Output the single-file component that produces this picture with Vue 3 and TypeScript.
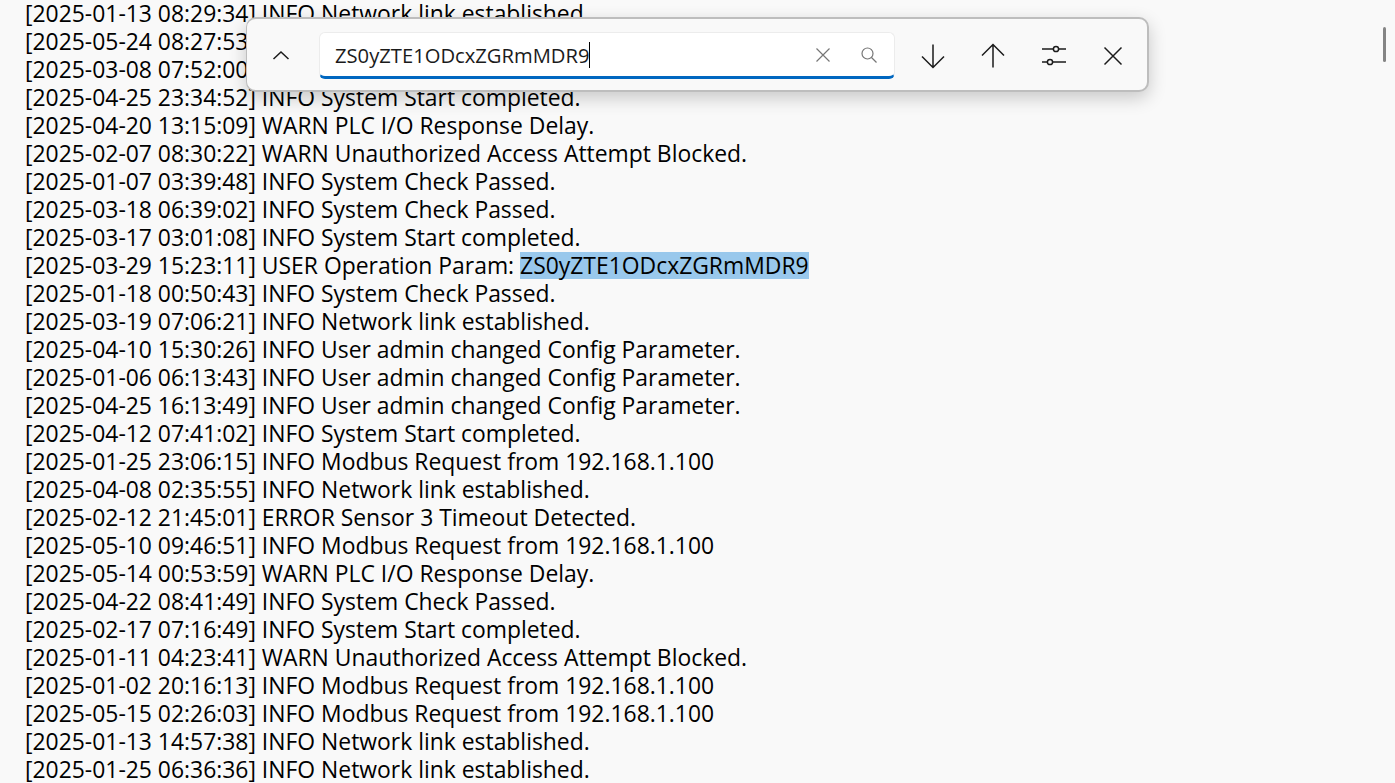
<script setup lang="ts">
const lines: string[] = [
  '[2025-01-13 08:29:34] INFO Network link established.',
  '[2025-05-24 08:27:53]',
  '[2025-03-08 07:52:00]',
  '[2025-04-25 23:34:52] INFO System Start completed.',
  '[2025-04-20 13:15:09] WARN PLC I/O Response Delay.',
  '[2025-02-07 08:30:22] WARN Unauthorized Access Attempt Blocked.',
  '[2025-01-07 03:39:48] INFO System Check Passed.',
  '[2025-03-18 06:39:02] INFO System Check Passed.',
  '[2025-03-17 03:01:08] INFO System Start completed.',
  '[2025-03-29 15:23:11] USER Operation Param: ',
  '[2025-01-18 00:50:43] INFO System Check Passed.',
  '[2025-03-19 07:06:21] INFO Network link established.',
  '[2025-04-10 15:30:26] INFO User admin changed Config Parameter.',
  '[2025-01-06 06:13:43] INFO User admin changed Config Parameter.',
  '[2025-04-25 16:13:49] INFO User admin changed Config Parameter.',
  '[2025-04-12 07:41:02] INFO System Start completed.',
  '[2025-01-25 23:06:15] INFO Modbus Request from 192.168.1.100',
  '[2025-04-08 02:35:55] INFO Network link established.',
  '[2025-02-12 21:45:01] ERROR Sensor 3 Timeout Detected.',
  '[2025-05-10 09:46:51] INFO Modbus Request from 192.168.1.100',
  '[2025-05-14 00:53:59] WARN PLC I/O Response Delay.',
  '[2025-04-22 08:41:49] INFO System Check Passed.',
  '[2025-02-17 07:16:49] INFO System Start completed.',
  '[2025-01-11 04:23:41] WARN Unauthorized Access Attempt Blocked.',
  '[2025-01-02 20:16:13] INFO Modbus Request from 192.168.1.100',
  '[2025-05-15 02:26:03] INFO Modbus Request from 192.168.1.100',
  '[2025-01-13 14:57:38] INFO Network link established.',
  '[2025-01-25 06:36:36] INFO Network link established.',
]
const query = 'ZS0yZTE1ODcxZGRmMDR9'
</script>

<template>
  <div class="page">
    <div class="log">
      <div v-for="(line, i) in lines" :key="i" class="line">{{ line }}<mark v-if="i === 9" class="hit">{{ query }}</mark></div>
    </div>
    <div class="thumb"></div>
    <div class="find">
      <button class="btn chevron" aria-label="Collapse">
        <svg width="18" height="18" viewBox="0 0 18 18"><path d="M1.5 12 9 5l7.5 7" /></svg>
      </button>
      <div class="field">
        <span class="value">{{ query }}</span><span class="caret"></span>
        <span class="spacer"></span>
        <svg class="mini clear" width="16" height="16" viewBox="0 0 16 16"><path d="M1.5 1.5l13 13M14.5 1.5l-13 13" /></svg>
        <svg class="mini search" width="18" height="18" viewBox="0 0 18 18"><circle cx="7.5" cy="7.5" r="5.5" /><path d="M11.5 11.5l5 5" /></svg>
      </div>
      <div class="actions">
        <button class="btn" aria-label="Next">
          <svg width="26" height="26" viewBox="0 0 26 26"><path d="M13 1.5v23M2 13.5l11 11 11-11" /></svg>
        </button>
        <button class="btn" aria-label="Previous">
          <svg width="26" height="26" viewBox="0 0 26 26"><path d="M13 24.5v-23M2 12.5l11-11 11 11" /></svg>
        </button>
        <button class="btn" aria-label="Options">
          <svg width="26" height="26" viewBox="0 0 26 26"><path d="M2 6h11.500M18.500 6H26M2 19h5.500M12.500 19H26" /><circle cx="16" cy="6" r="2.600" /><circle cx="10" cy="19" r="2.600" /></svg>
        </button>
        <button class="btn" aria-label="Close">
          <svg width="26" height="26" viewBox="0 0 26 26"><path d="M4.500 4.500l17 17M21.500 4.500l-17 17" /></svg>
        </button>
      </div>
    </div>
  </div>
</template>

<style scoped>
.page {
  position: relative;
  width: 1395px;
  height: 783px;
  overflow: hidden;
  background: #f9f9f9;
  font-family: "Open Sans", "Noto Sans", sans-serif;
  color: #000;
}
.log {
  padding-left: 25px;
}
.line {
  height: 28px;
  line-height: 28px;
  font-size: 22.900px;
  white-space: pre;
}
.hit {
  display: inline-block;
  height: 27px;
  line-height: 28px;
  background: #99c8ec;
  color: #000;
  vertical-align: top;
}
.thumb {
  position: absolute;
  left: 1383px;
  top: 27px;
  width: 3px;
  height: 35px;
  border-radius: 2px;
  background: #858585;
}
.find {
  position: absolute;
  left: 246px;
  top: 17px;
  box-sizing: border-box;
  width: 903px;
  height: 75px;
  display: flex;
  align-items: center;
  padding: 2px 0 0 14px;
  background: #f9f9f9;
  border: 2px solid #bdbdbd;
  border-left-width: 1px;
  border-radius: 10px;
  box-shadow: 0 6px 18px rgba(0, 0, 0, 0.2);
}
.btn {
  width: 60px;
  height: 44px;
  display: flex;
  align-items: center;
  justify-content: center;
  padding: 0;
  border: 0;
  background: none;
}
.btn svg {
  fill: none;
  stroke: #1b1b1b;
  stroke-width: 1.500;
}
.chevron {
  width: 40px;
  margin-right: 18px;
}
.field {
  box-sizing: border-box;
  width: 576px;
  height: 47px;
  display: flex;
  align-items: center;
  padding: 0 16px 0 15px;
  background: #fff;
  border: 1px solid #ececec;
  border-bottom: 3px solid #0067c0;
  border-radius: 6px;
  font-size: 20.200px;
  color: #1b1b1b;
}
.caret {
  width: 1px;
  height: 26px;
  background: #000;
}
.spacer {
  flex: 1;
}
.mini {
  fill: none;
  stroke: #767676;
  stroke-width: 1.200;
}
.clear {
  margin-right: 29px;
}
.actions {
  display: flex;
  margin-left: 8px;
}
</style>
